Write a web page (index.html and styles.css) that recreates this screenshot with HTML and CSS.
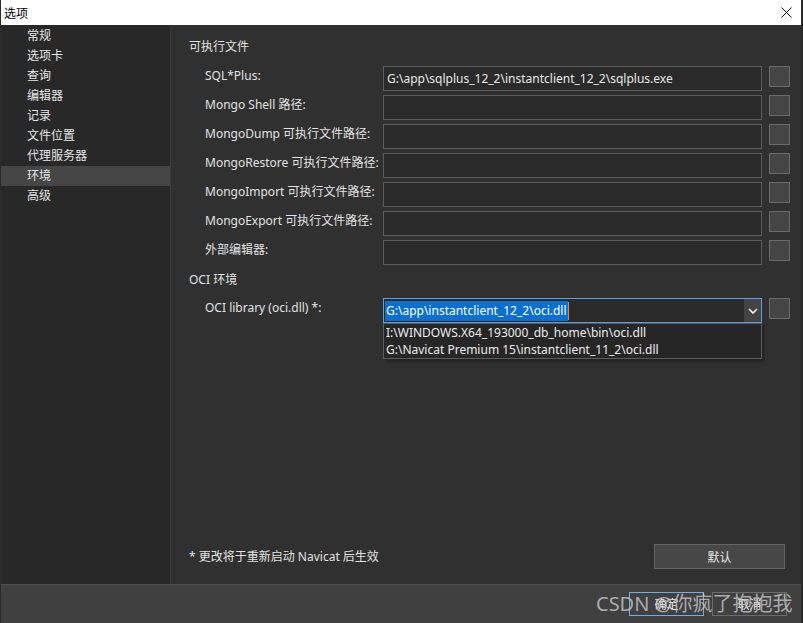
FILE: index.html
```html
<!DOCTYPE html>
<html lang="zh-CN">
<head>
<meta charset="utf-8">
<title>选项</title>
<link rel="stylesheet" href="styles.css">
</head>
<body>
<div class="window">
  <div class="titlebar">
    <span class="title">选项</span>
    <span class="close">
      <svg width="11" height="11" viewBox="0 0 11 11"><path d="M0.5 0.5 L10.5 10.5 M10.5 0.5 L0.5 10.5" stroke="#000" stroke-width="1" fill="none"/></svg>
    </span>
  </div>
  <div class="body">
    <nav class="sidebar">
      <div class="nav-item">常规</div>
      <div class="nav-item">选项卡</div>
      <div class="nav-item">查询</div>
      <div class="nav-item">编辑器</div>
      <div class="nav-item">记录</div>
      <div class="nav-item">文件位置</div>
      <div class="nav-item">代理服务器</div>
      <div class="nav-item active">环境</div>
      <div class="nav-item">高级</div>
    </nav>
    <main class="panel">
      <div class="section-title">可执行文件</div>
      <div class="rows">
        <div class="row">
          <label class="label">SQL*Plus:</label>
          <div class="input">G:\app\sqlplus_12_2\instantclient_12_2\sqlplus.exe</div>
          <div class="browse"></div>
        </div>
        <div class="row">
          <label class="label">Mongo Shell 路径:</label>
          <div class="input"></div>
          <div class="browse"></div>
        </div>
        <div class="row">
          <label class="label">MongoDump 可执行文件路径:</label>
          <div class="input"></div>
          <div class="browse"></div>
        </div>
        <div class="row">
          <label class="label">MongoRestore 可执行文件路径:</label>
          <div class="input"></div>
          <div class="browse"></div>
        </div>
        <div class="row">
          <label class="label">MongoImport 可执行文件路径:</label>
          <div class="input"></div>
          <div class="browse"></div>
        </div>
        <div class="row">
          <label class="label">MongoExport 可执行文件路径:</label>
          <div class="input"></div>
          <div class="browse"></div>
        </div>
        <div class="row">
          <label class="label">外部编辑器:</label>
          <div class="input"></div>
          <div class="browse"></div>
        </div>
      </div>
      <div class="section-title oci-title">OCI 环境</div>
      <div class="row">
        <label class="label">OCI library (oci.dll) *:</label>
        <div class="combo">
          <div class="combo-value"><span class="selected">G:\app\instantclient_12_2\oci.dll</span><span class="caret"></span></div>
          <div class="combo-arrow">
            <svg width="10" height="6" viewBox="0 0 10 6"><path d="M1 1 L5 5 L9 1" stroke="#ffffff" stroke-width="1.5" fill="none"/></svg>
          </div>
          <div class="dropdown">
            <div class="dd-item">I:\WINDOWS.X64_193000_db_home\bin\oci.dll</div>
            <div class="dd-item">G:\Navicat Premium 15\instantclient_11_2\oci.dll</div>
          </div>
        </div>
        <div class="browse"></div>
      </div>
      <div class="footer">
        <span class="note">* 更改将于重新启动 Navicat 后生效</span>
        <button class="btn default-btn">默认</button>
      </div>
    </main>
  </div>
  <div class="bottombar">
    <button class="btn ok-btn">确定</button>
    <button class="btn cancel-btn">取消</button>
    <span class="watermark">CSDN @你疯了抱抱我</span>
  </div>
</div>
</body>
</html>
```
FILE: styles.css
```css
* { box-sizing: border-box; }
html, body {
  margin: 0;
  padding: 0;
  background: #2a2a2a;
  width: 803px;
  height: 623px;
  overflow: hidden;
}
body {
  font-family: "Noto Sans", "Noto Sans CJK SC", sans-serif;
  font-size: 12px;
  color: #e2e2e2;
}
.window {
  margin-left: 1px;
  width: 800px;
  height: 623px;
  display: flex;
  flex-direction: column;
  position: relative;
}
.titlebar {
  height: 25px;
  background: #ffffff;
  color: #000;
  display: flex;
  align-items: center;
  justify-content: space-between;
  padding: 0 9px 0 3px;
  font-size: 12px;
}
.close { display: flex; align-items: center; }
.body {
  flex: 1;
  display: flex;
  min-height: 0;
}
.sidebar {
  width: 170px;
  background: #282828;
  border-right: 1px solid #3a3a3a;
  padding-top: 1px;
}
.nav-item {
  height: 20px;
  line-height: 20px;
  padding-left: 26px;
  color: #e6e6e6;
}
.nav-item.active { background: #464646; }
.panel {
  flex: 1;
  background: #303030;
  padding: 12px 0 0 18px;
  display: flex;
  flex-direction: column;
}
.section-title {
  height: 20px;
  line-height: 20px;
  margin-bottom: 9px;
}
.oci-title {
  margin-top: 5px;
  margin-bottom: 8px;
}
.rows {
  display: flex;
  flex-direction: column;
  gap: 4px;
}
.row {
  display: flex;
  align-items: flex-start;
  height: 25px;
}
.label {
  width: 194px;
  flex: none;
  padding-left: 16px;
  line-height: 20px;
  white-space: nowrap;
  overflow: visible;
}
.input {
  width: 379px;
  flex: none;
  height: 25px;
  background: #2a2a2a;
  border: 1px solid #5c5c5c;
  line-height: 23px;
  padding-left: 3px;
  color: #e8e8e8;
  white-space: nowrap;
  overflow: hidden;
}
.browse {
  width: 21px;
  height: 21px;
  flex: none;
  margin-left: 7px;
  background: #454545;
  border: 1px solid #6a6a6a;
}
.combo {
  width: 379px;
  flex: none;
  height: 25px;
  border: 1px solid #5aa0de;
  background: #2a2a2a;
  display: flex;
  position: relative;
}
.combo-value {
  flex: 1;
  display: flex;
  align-items: center;
  padding-left: 1px;
}
.selected {
  background: #0a6fcf;
  color: #ffffff;
  line-height: 20px;
  padding: 0 1px;
}
.caret {
  width: 1px;
  height: 18px;
  background: #e0893a;
}
.combo-arrow {
  width: 17px;
  background: #434343;
  display: flex;
  align-items: center;
  justify-content: center;
}
.dropdown {
  position: absolute;
  left: -1px;
  top: 24px;
  width: 379px;
  background: #262626;
  border: 1px solid #5c5c5c;
  box-shadow: 2px 2px 3px rgba(0,0,0,0.35);
  z-index: 2;
}
.dd-item {
  height: 17px;
  line-height: 17px;
  padding-left: 2px;
  color: #ececec;
  white-space: nowrap;
}
.footer {
  margin-top: auto;
  margin-bottom: 15px;
  display: flex;
  align-items: center;
  justify-content: space-between;
  padding-right: 16px;
}
.note { line-height: 20px; }
.btn {
  font-family: "Noto Sans", "Noto Sans CJK SC", sans-serif;
  font-size: 12px;
  color: #e6e6e6;
  background: #474747;
  border: 1px solid #646464;
  padding: 0;
  margin: 0;
}
.default-btn {
  width: 131px;
  height: 25px;
}
.bottombar {
  height: 39px;
  background: #404040;
  border-top: 1px solid #4c4c4c;
  display: flex;
  align-items: flex-start;
  justify-content: flex-end;
  gap: 8px;
  padding: 7px 14px 0 0;
  position: relative;
}
.ok-btn, .cancel-btn {
  width: 75px;
  height: 24px;
  background: #404040;
}
.ok-btn { border-color: #6eaee6; }
.cancel-btn { border-color: #6a6a6a; }
.watermark {
  position: absolute;
  left: 595px;
  top: 6px;
  font-size: 20px;
  line-height: 26px;
  color: rgba(200, 200, 200, 0.8);
  font-family: "Noto Sans", "Noto Sans CJK SC", sans-serif;
  white-space: nowrap;
  pointer-events: none;
}
```
